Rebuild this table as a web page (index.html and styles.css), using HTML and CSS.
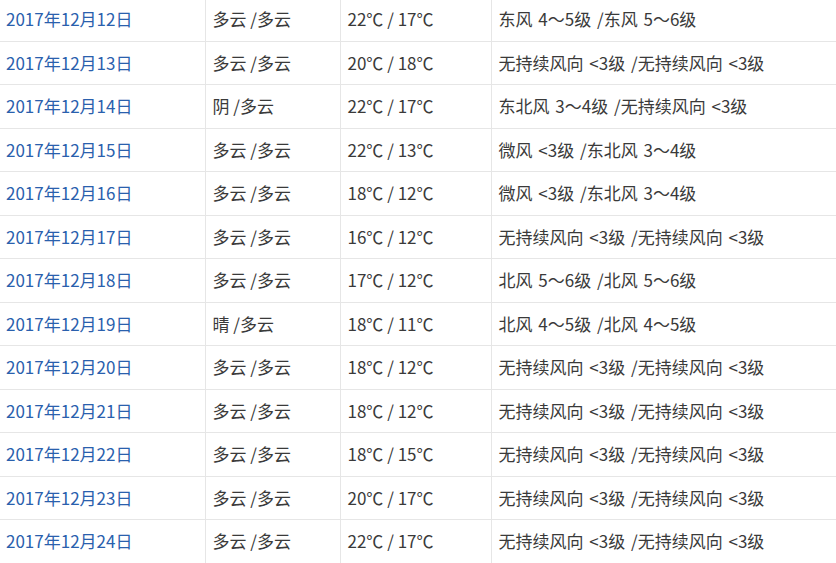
FILE: index.html
```html
<!DOCTYPE html>
<html lang="zh-CN">
<head>
<meta charset="utf-8">
<link rel="stylesheet" href="styles.css">
</head>
<body>
<table class="weather">
<colgroup><col class="c-date"><col class="c-sky"><col class="c-temp"><col class="c-wind"></colgroup>
<tbody>
<tr><td><a href="#">2017年12月12日</a></td><td>多云 /多云</td><td>22℃ / 17℃</td><td class="wind">东风 4～5级 /东风 5～6级</td></tr>
<tr><td><a href="#">2017年12月13日</a></td><td>多云 /多云</td><td>20℃ / 18℃</td><td class="wind">无持续风向 &lt;3级 /无持续风向 &lt;3级</td></tr>
<tr><td><a href="#">2017年12月14日</a></td><td>阴 /多云</td><td>22℃ / 17℃</td><td class="wind">东北风 3～4级 /无持续风向 &lt;3级</td></tr>
<tr><td><a href="#">2017年12月15日</a></td><td>多云 /多云</td><td>22℃ / 13℃</td><td class="wind">微风 &lt;3级 /东北风 3～4级</td></tr>
<tr><td><a href="#">2017年12月16日</a></td><td>多云 /多云</td><td>18℃ / 12℃</td><td class="wind">微风 &lt;3级 /东北风 3～4级</td></tr>
<tr><td><a href="#">2017年12月17日</a></td><td>多云 /多云</td><td>16℃ / 12℃</td><td class="wind">无持续风向 &lt;3级 /无持续风向 &lt;3级</td></tr>
<tr><td><a href="#">2017年12月18日</a></td><td>多云 /多云</td><td>17℃ / 12℃</td><td class="wind">北风 5～6级 /北风 5～6级</td></tr>
<tr><td><a href="#">2017年12月19日</a></td><td>晴 /多云</td><td>18℃ / 11℃</td><td class="wind">北风 4～5级 /北风 4～5级</td></tr>
<tr><td><a href="#">2017年12月20日</a></td><td>多云 /多云</td><td>18℃ / 12℃</td><td class="wind">无持续风向 &lt;3级 /无持续风向 &lt;3级</td></tr>
<tr><td><a href="#">2017年12月21日</a></td><td>多云 /多云</td><td>18℃ / 12℃</td><td class="wind">无持续风向 &lt;3级 /无持续风向 &lt;3级</td></tr>
<tr><td><a href="#">2017年12月22日</a></td><td>多云 /多云</td><td>18℃ / 15℃</td><td class="wind">无持续风向 &lt;3级 /无持续风向 &lt;3级</td></tr>
<tr><td><a href="#">2017年12月23日</a></td><td>多云 /多云</td><td>20℃ / 17℃</td><td class="wind">无持续风向 &lt;3级 /无持续风向 &lt;3级</td></tr>
<tr><td><a href="#">2017年12月24日</a></td><td>多云 /多云</td><td>22℃ / 17℃</td><td class="wind">无持续风向 &lt;3级 /无持续风向 &lt;3级</td></tr>
</tbody>
</table>
</body>
</html>
```

FILE: styles.css
```css
html, body {
  margin: 0;
  padding: 0;
  background: #ffffff;
  overflow: hidden;
}
.weather {
  width: 836px;
  margin-top: -3px;
  border-collapse: collapse;
  table-layout: fixed;
  font-family: "Noto Sans CJK SC", "Noto Sans", sans-serif;
  font-size: 17px;
  color: #3a3a3a;
}
.c-date { width: 205px; }
.c-sky { width: 135px; }
.c-temp { width: 151px; }
.c-wind { width: 345px; }
.weather td {
  height: 42.5px;
  padding: 0 0 0 6px;
  border-top: 1px solid #e6e6e6;
  border-bottom: 1px solid #e6e6e6;
  border-left: 1px solid #e6e6e6;
  vertical-align: middle;
  white-space: nowrap;
  line-height: 20px;
}
.weather td:first-child { border-left: none; }
.weather td:nth-child(2),
.weather td:nth-child(3),
.weather td:nth-child(4) { padding-left: 7px; }
.weather td.wind { word-spacing: 2px; }
.weather a {
  color: #2a60ad;
  text-decoration: none;
}
```
